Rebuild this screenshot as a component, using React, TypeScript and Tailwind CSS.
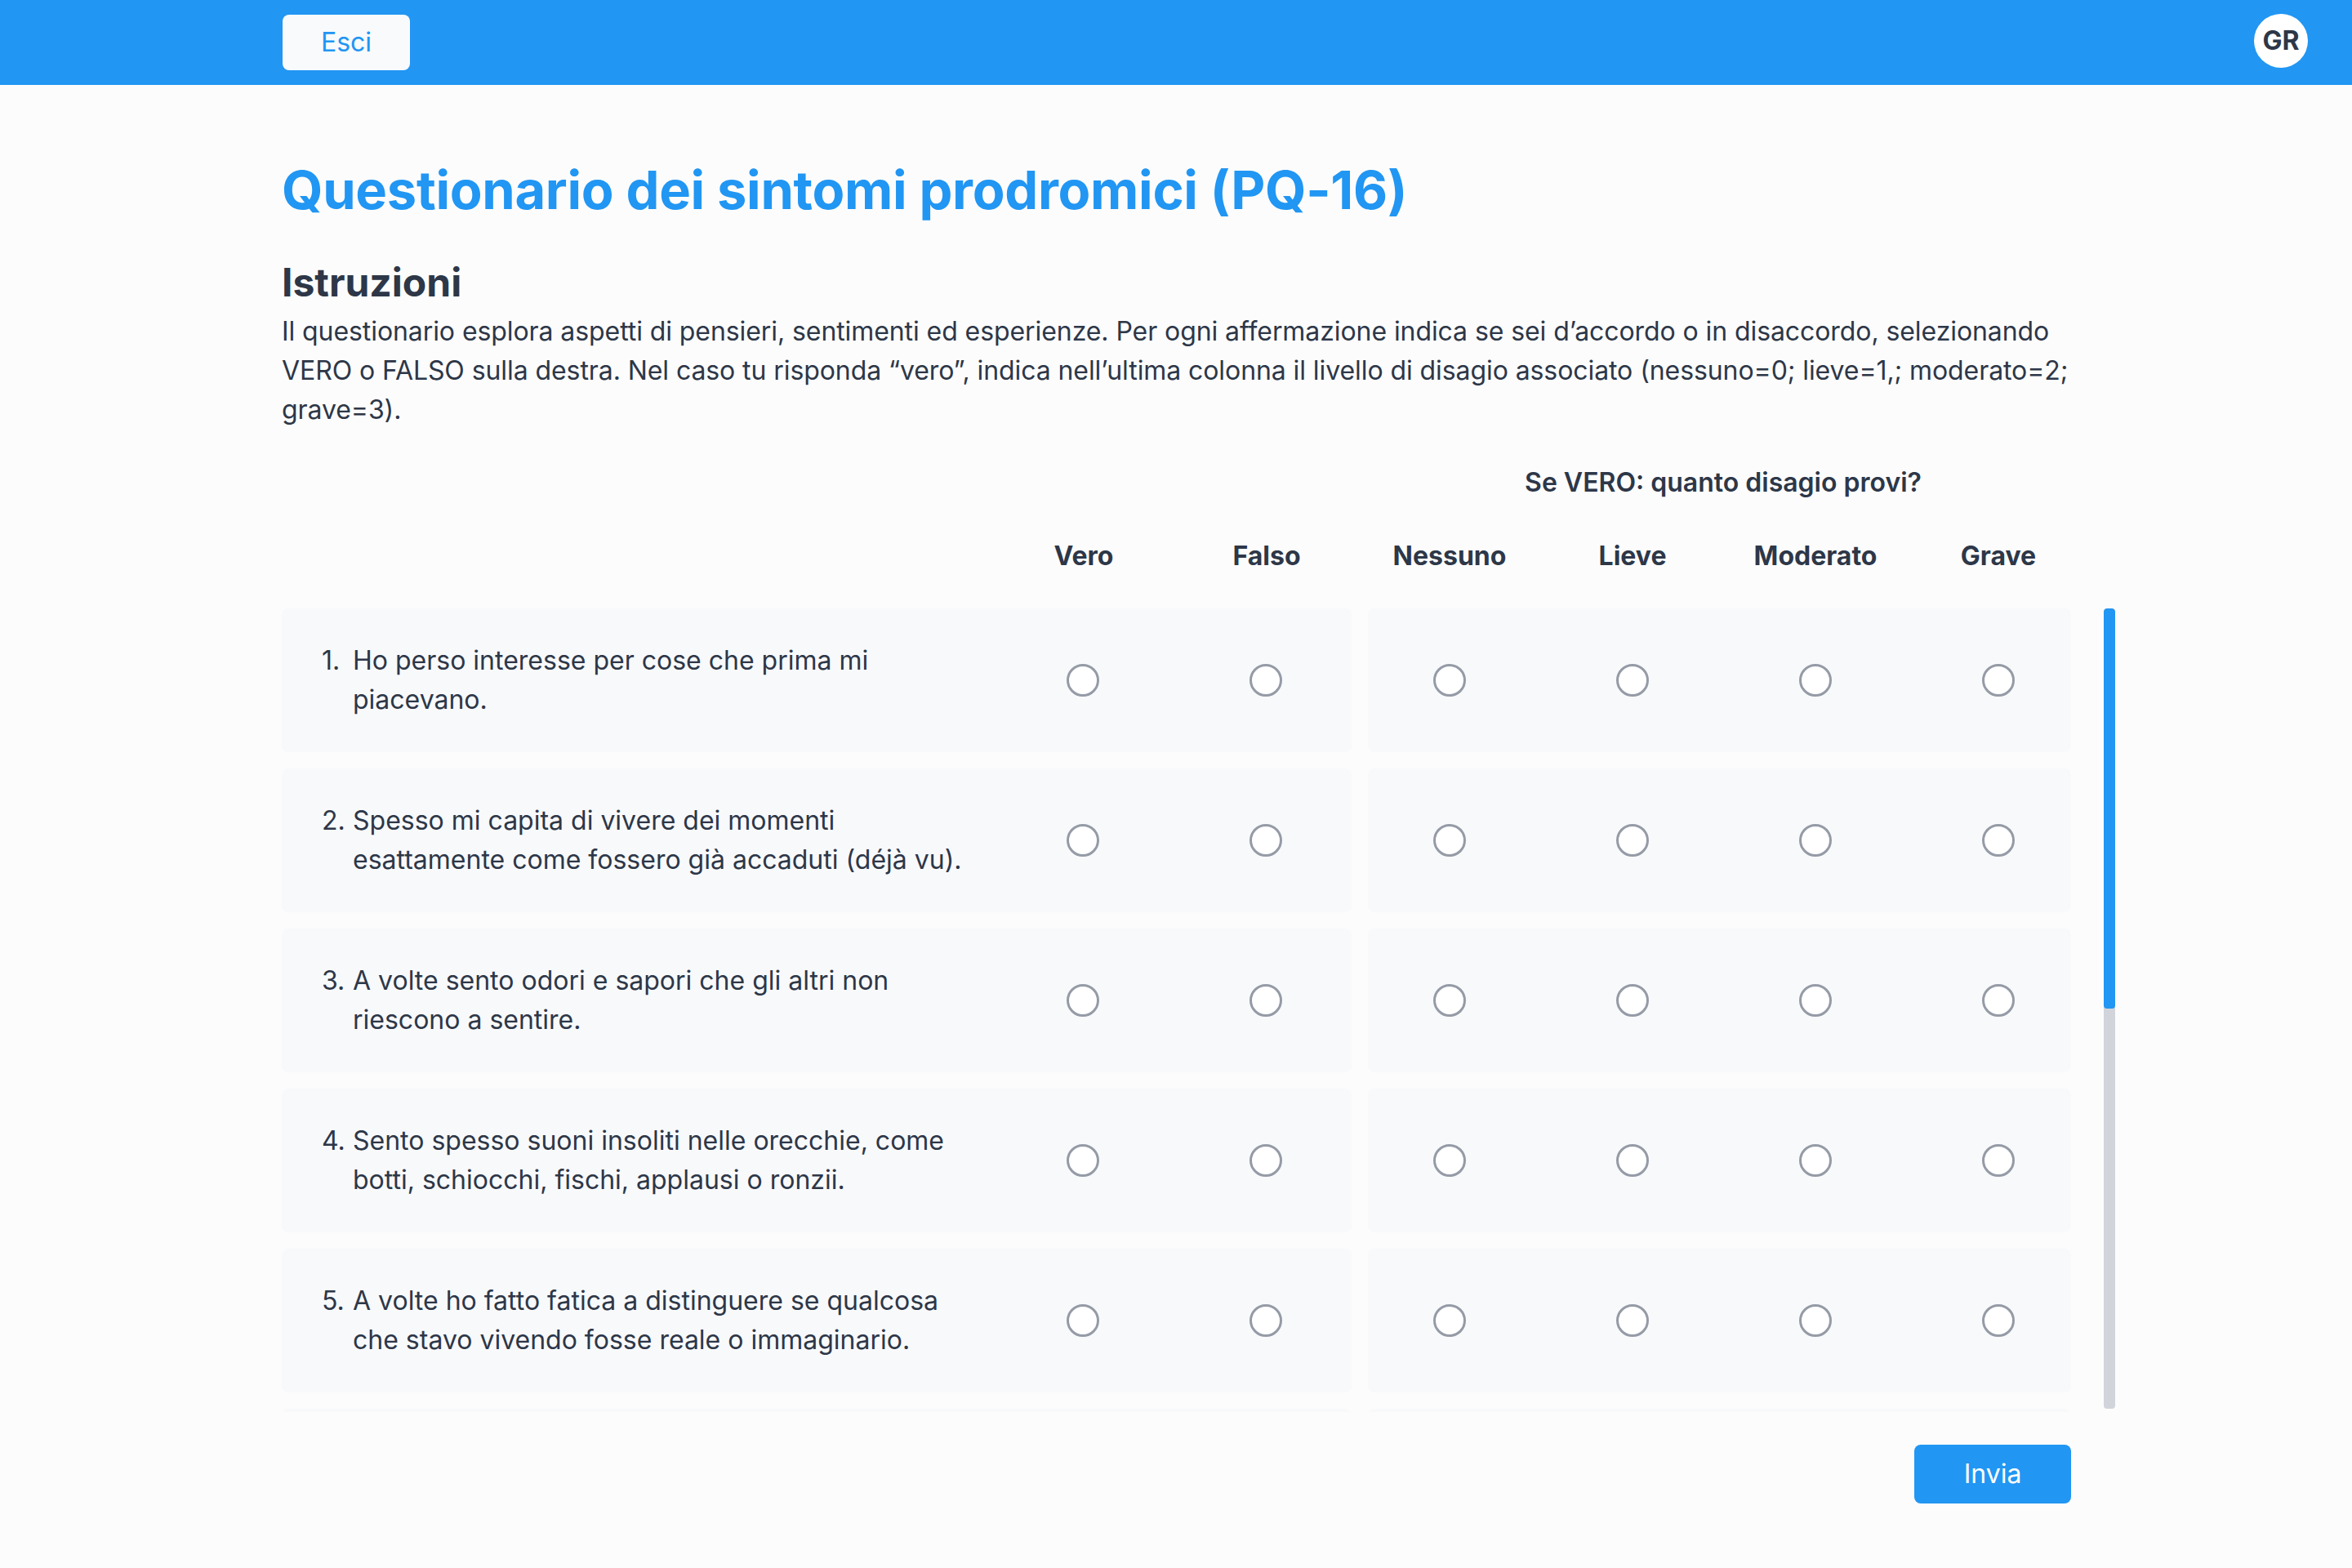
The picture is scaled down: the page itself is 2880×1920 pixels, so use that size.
import { useState } from "react";

const questions = [
  "Ho perso interesse per cose che prima mi piacevano.",
  "Spesso mi capita di vivere dei momenti esattamente come fossero già accaduti (déjà vu).",
  "A volte sento odori e sapori che gli altri non riescono a sentire.",
  "Sento spesso suoni insoliti nelle orecchie, come botti, schiocchi, fischi, applausi o ronzii.",
  "A volte ho fatto fatica a distinguere se qualcosa che stavo vivendo fosse reale o immaginario.",
  "Quando guardo una persona, o mi guardo allo specchio, ho visto il volto cambiare davanti ai miei occhi.",
  "Divento estremamente ansioso quando incontro delle persone per la prima volta.",
  "Ho visto cose che apparentemente gli altri non riescono a vedere.",
  "A volte i miei pensieri sono così forti che riesco quasi a sentirli.",
  "A volte vedo significati particolari nelle pubblicità, nelle vetrine o nel modo in cui le cose sono disposte intorno a me.",
  "A volte ho avuto la sensazione di non avere il controllo delle mie idee o dei miei pensieri.",
  "A volte mi distraggo all'improvviso per dei suoni lontani di cui di solito non mi accorgo.",
  "Ho sentito cose che gli altri non riescono a sentire, come voci di persone che bisbigliano o parlano.",
  "Sento spesso che gli altri ce l'hanno con me.",
  "Ho avuto la sensazione che qualcuno o qualcosa fosse intorno a me, anche se non vedevo nessuno.",
  "Sento che parti del mio corpo sono cambiate in qualche modo, o funzionano diversamente da prima.",
];

const columns = ["Vero", "Falso", "Nessuno", "Lieve", "Moderato", "Grave"];

type Answer = { vf?: string; level?: string };

function Radio({
  name,
  value,
  checked,
  onChange,
  className = "",
}: {
  name: string;
  value: string;
  checked: boolean;
  onChange: () => void;
  className?: string;
}) {
  return (
    <input
      type="radio"
      name={name}
      value={value}
      checked={checked}
      onChange={onChange}
      className={`appearance-none w-[40px] h-[40px] shrink-0 rounded-full border-[3px] border-[#959ba6] bg-white cursor-pointer checked:border-[12px] checked:border-[#2196f3] ${className}`}
    />
  );
}

export default function App() {
  const [answers, setAnswers] = useState<Record<number, Answer>>({});

  const setAnswer = (i: number, key: keyof Answer, value: string) => {
    setAnswers((prev) => ({ ...prev, [i]: { ...prev[i], [key]: value } }));
  };

  return (
    <div
      className="min-h-screen bg-[#fcfcfc] text-[#2d3748]"
      style={{ fontFamily: "Inter, 'Noto Sans', 'Liberation Sans', sans-serif" }}
    >
      {/* Top bar */}
      <header className="h-[104px] bg-[#2196f3] flex items-center justify-between pl-[346px] pr-[54px]">
        <button className="w-[156px] h-[68px] rounded-[8px] bg-[#f8fafc] text-[#2196f3] text-[32px] leading-none">
          Esci
        </button>
        <div className="w-[66px] h-[66px] mb-[4px] rounded-full bg-white flex items-center justify-center text-[32px] font-bold text-[#2d3748]">
          GR
        </div>
      </header>

      <main className="pl-[345px] pt-[89px] pb-[60px]">
        <div className="w-[2191px]">
          <h1 className="text-[65px] leading-[80px] font-bold tracking-[-0.3px] text-[#2196f3]">
            Questionario dei sintomi prodromici (PQ-16)
          </h1>

          <h2 className="mt-[37px] text-[48px] leading-[72px] font-bold">Istruzioni</h2>
          <p className="text-[32px] leading-[48px] tracking-[-0.08px]">
            Il questionario esplora aspetti di pensieri, sentimenti ed esperienze. Per ogni affermazione
            indica se sei d’accordo o in disaccordo, selezionando VERO o FALSO sulla destra. Nel caso tu
            risponda “vero”, indica nell’ultima colonna il livello di disagio associato (nessuno=0;
            lieve=1,; moderato=2; grave=3).
          </p>

          {/* Column headers */}
          <div className="mt-[41px] flex">
            <div className="w-[1317px] shrink-0" />
            <div className="w-[896px] shrink-0 text-center text-[32px] leading-[48px] font-semibold">
              Se VERO: quanto disagio provi?
            </div>
          </div>
          <div className="mt-[42px] flex">
            <div className="w-[870px] shrink-0" />
            {columns.map((c) => (
              <div
                key={c}
                className="w-[224px] shrink-0 text-center text-[32px] leading-[48px] font-bold"
              >
                {c}
              </div>
            ))}
          </div>
        </div>

        {/* Questions list with scrollbar */}
        <div className="mt-[40px] flex gap-[40px]">
          <div className="w-[2191px] h-[984px] overflow-y-auto [scrollbar-width:none] flex flex-col gap-[20px]">
            {questions.map((q, i) => {
              const a = answers[i] || {};
              return (
                <div key={i} className="flex gap-[20px] shrink-0">
                  <div className="w-[1310px] h-[176px] shrink-0 rounded-[8px] bg-[#f8f9fb] flex items-center pl-[49px]">
                    <div className="w-[820px] shrink-0 pr-[14px] flex text-[32px] leading-[48px]">
                      <span className="w-[38px] shrink-0">{i + 1}.</span>
                      <span>{q}</span>
                    </div>
                    <Radio
                      name={`q${i}-vf`}
                      value="vero"
                      checked={a.vf === "vero"}
                      onChange={() => setAnswer(i, "vf", "vero")}
                      className="ml-[92px]"
                    />
                    <Radio
                      name={`q${i}-vf`}
                      value="falso"
                      checked={a.vf === "falso"}
                      onChange={() => setAnswer(i, "vf", "falso")}
                      className="ml-[184px]"
                    />
                  </div>
                  <div className="w-[861px] h-[176px] shrink-0 rounded-[8px] bg-[#f8f9fb] flex items-center pl-[80px] gap-[184px]">
                    {["0", "1", "2", "3"].map((lvl) => (
                      <Radio
                        key={lvl}
                        name={`q${i}-level`}
                        value={lvl}
                        checked={a.level === lvl}
                        onChange={() => setAnswer(i, "level", lvl)}
                      />
                    ))}
                  </div>
                </div>
              );
            })}
          </div>

          {/* scrollbar */}
          <div className="w-[14px] h-[980px] rounded-[4px] bg-[#d1d5db] overflow-hidden">
            <div className="h-[490px] bg-[#2196f3] rounded-[4px]" />
          </div>
        </div>

        <div className="w-[2191px] mt-[40px] flex justify-end">
          <button className="w-[192px] h-[72px] rounded-[8px] bg-[#2196f3] text-white text-[32px]">
            Invia
          </button>
        </div>
      </main>
    </div>
  );
}
